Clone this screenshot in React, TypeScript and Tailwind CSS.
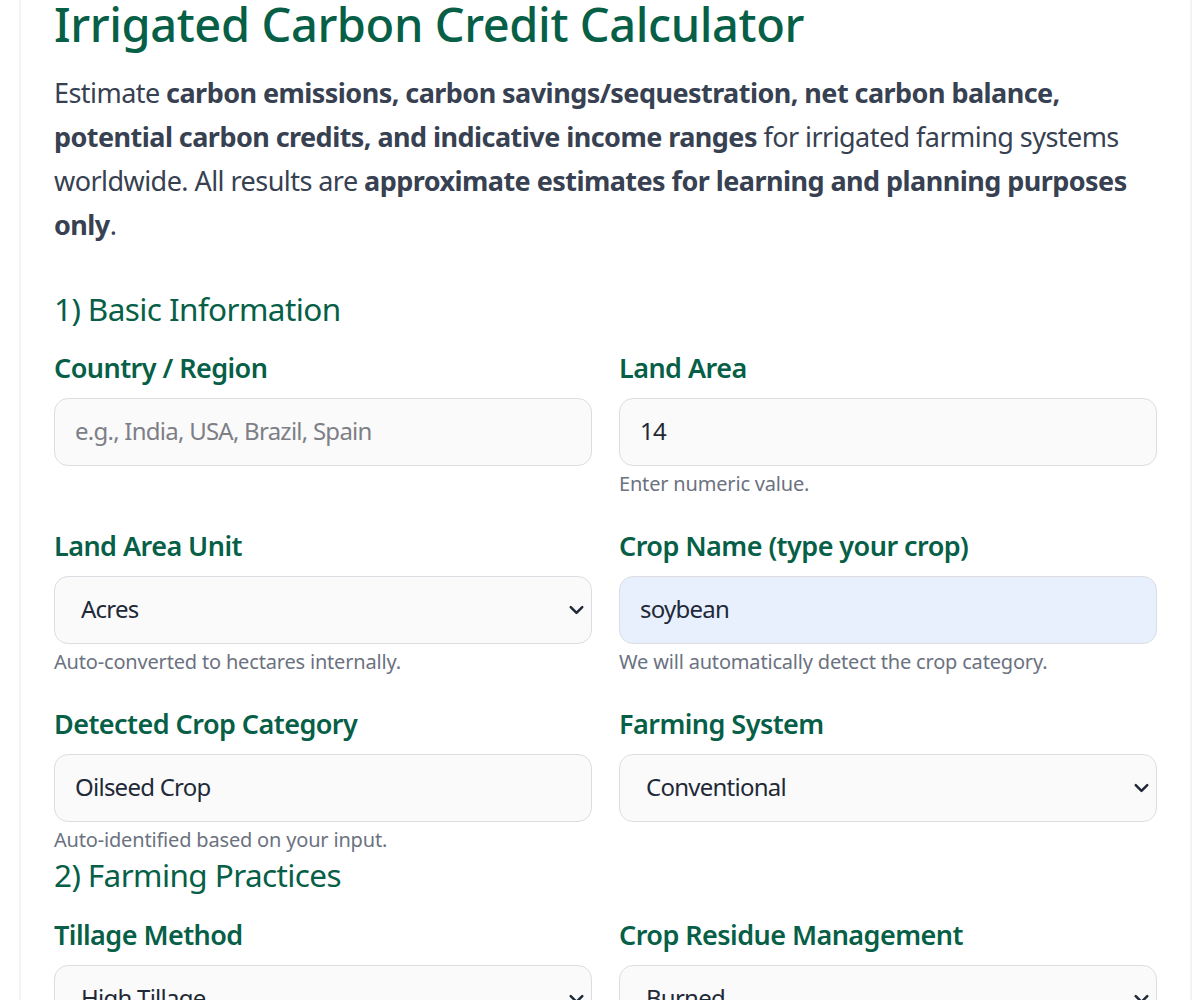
import React from 'react';
import { ChevronDown } from 'lucide-react';

const labelCls = 'block text-[27px] leading-[32px] font-semibold text-[#065f46] tracking-[-0.55px] mb-[14px]';
const controlCls =
  'block w-full h-[68px] rounded-[14px] border border-[#dcdde3] text-[24px] tracking-[-0.75px] text-[#1f2937] outline-none placeholder:text-[#7d7f86]';
const inputCls = `${controlCls} px-[20px] pb-[3px]`;
const hintCls = 'mt-[8px] text-[20px] leading-[20px] tracking-[-0.18px] text-[#6b7280]';
const headingCls = 'text-[31.5px] leading-[40px] font-normal tracking-[-0.6px] text-[#065f46]';

const Field = ({ label, hint, children }: { label: string; hint?: string; children: React.ReactNode }) => (
  <div>
    <label className={labelCls}>{label}</label>
    {children}
    {hint && <p className={hintCls}>{hint}</p>}
  </div>
);

const Select = ({ value, options }: { value: string; options: string[] }) => (
  <div className="relative">
    <select className={`${controlCls} appearance-none bg-[#fafafb] px-[26px] pb-[2px]`} defaultValue={value}>
      {options.map((o) => (
        <option key={o}>{o}</option>
      ))}
    </select>
    <ChevronDown
      size={23}
      strokeWidth={2.6}
      className="absolute right-[4px] top-1/2 -translate-y-1/2 text-[#1f2937] pointer-events-none"
    />
  </div>
);

const App = () => {
  return (
    <div className="h-screen overflow-hidden bg-white font-['Noto_Sans','Open_Sans',sans-serif]">
      <div className="ml-[19px] mr-[8px] h-full border-x-2 border-[#f3f3f3] px-[33px]">
        <h1 className="text-[47px] leading-[48px] font-medium tracking-[-0.4px] text-[#065f46]">
          Irrigated Carbon Credit Calculator
        </h1>
        <p className="mt-[23px] text-[27px] leading-[44px] tracking-[-0.55px] text-[#374151]">
          Estimate <strong className="font-bold">carbon emissions, carbon savings/sequestration, net carbon balance, potential carbon credits, and indicative income ranges</strong> for irrigated farming systems worldwide. All results are <strong className="font-bold">approximate estimates for learning and planning purposes only</strong>.
        </p>

        <h2 className={`${headingCls} mt-[42px] mb-[23px]`}>1) Basic Information</h2>
        <div className="grid grid-cols-2 gap-x-[27px] gap-y-[36px]">
          <Field label="Country / Region">
            <input className={`${inputCls} bg-[#fafafb]`} placeholder="e.g., India, USA, Brazil, Spain" />
          </Field>
          <Field label="Land Area" hint="Enter numeric value.">
            <input className={`${inputCls} bg-[#fafafb]`} defaultValue="14" />
          </Field>
          <Field label="Land Area Unit" hint="Auto-converted to hectares internally.">
            <Select value="Acres" options={['Acres', 'Hectares']} />
          </Field>
          <Field label="Crop Name (type your crop)" hint="We will automatically detect the crop category.">
            <input className={`${inputCls} bg-[#e8f0fe]`} defaultValue="soybean" />
          </Field>
          <Field label="Detected Crop Category" hint="Auto-identified based on your input.">
            <input className={`${inputCls} bg-[#fafafb]`} defaultValue="Oilseed Crop" readOnly />
          </Field>
          <Field label="Farming System">
            <Select value="Conventional" options={['Conventional', 'Organic']} />
          </Field>
        </div>

        <h2 className={`${headingCls} mt-[5px] mb-[24px]`}>2) Farming Practices</h2>
        <div className="grid grid-cols-2 gap-x-[27px]">
          <Field label="Tillage Method">
            <Select value="High Tillage" options={['High Tillage']} />
          </Field>
          <Field label="Crop Residue Management">
            <Select value="Burned" options={['Burned']} />
          </Field>
        </div>
      </div>
    </div>
  );
};

export default App;
